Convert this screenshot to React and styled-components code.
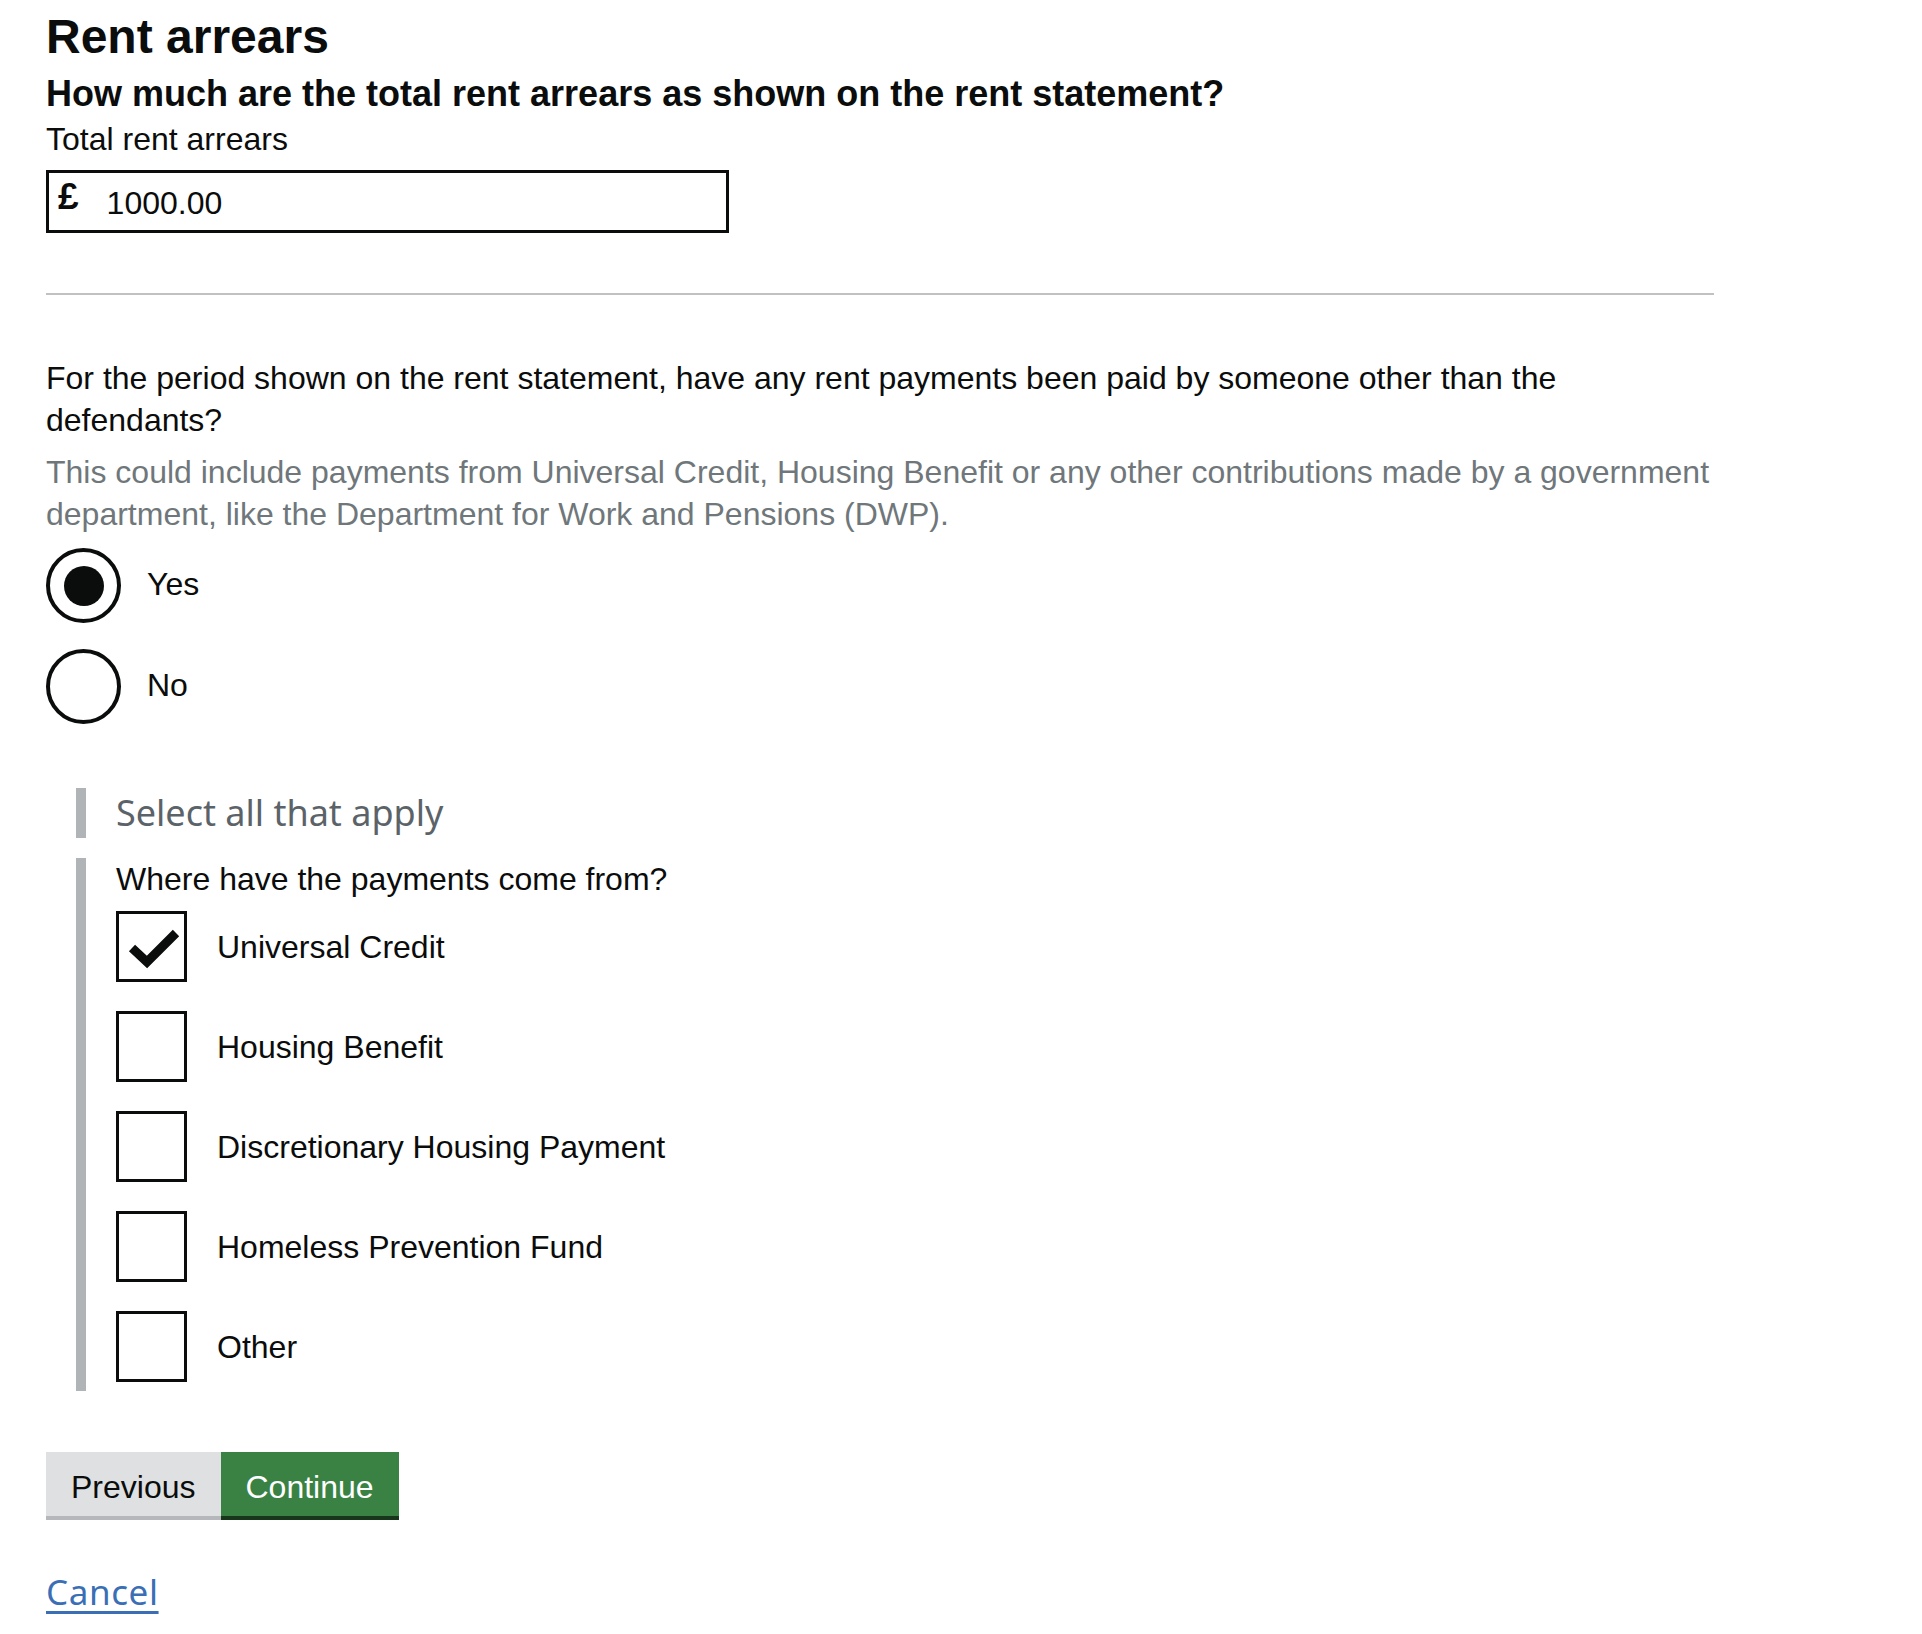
import React from 'react';
import styled, { createGlobalStyle } from 'styled-components';

const GlobalStyle = createGlobalStyle`
  body {
    margin: 0;
    background: #fff;
    color: #0b0c0c;
    font-family: "Liberation Sans", Arial, sans-serif;
  }
`;

const Page = styled.main`
  width: 1668px;
  padding: 10px 0 24px 46px;
`;

const Title = styled.h1`
  margin: 0;
  font-size: 48px;
  line-height: 54px;
  font-weight: 700;
`;

const Question = styled.h2`
  margin: 8px 0 0;
  font-size: 36px;
  line-height: 44px;
  font-weight: 700;
`;

const Label = styled.label`
  display: block;
  margin-top: 2px;
  font-size: 32px;
  line-height: 42px;
`;

const MoneyBox = styled.div`
  display: flex;
  align-items: center;
  width: 683px;
  height: 63px;
  margin-top: 10px;
  box-sizing: border-box;
  border: 3px solid #0b0c0c;
  padding-left: 9px;
`;

const Currency = styled.span`
  font-size: 37px;
  font-weight: 700;
  line-height: 1;
  margin-top: -10px;
`;

const MoneyInput = styled.input`
  flex: 1;
  border: 0;
  outline: none;
  padding: 4px 0 0 28px;
  font-family: inherit;
  font-size: 32px;
  color: #0b0c0c;
  background: transparent;
`;

const Divider = styled.hr`
  margin: 60px 0 0;
  border: 0;
  border-top: 2px solid #bfc1c3;
`;

const Paragraph = styled.p`
  margin: 62px 0 0;
  font-size: 32px;
  line-height: 42px;
`;

const Hint = styled.p`
  margin: 10px 0 0;
  font-size: 32px;
  line-height: 42px;
  color: #6f777b;
`;

const Choices = styled.div`
  display: flex;
  flex-direction: column;
  gap: 26px;
  margin-top: 13px;
`;

const Choice = styled.label`
  display: flex;
  align-items: center;
  gap: 26px;
  font-size: 32px;
  line-height: 42px;
`;

const ChoiceText = styled.span`
  margin-top: -4px;
`;

const Radio = styled.span`
  display: flex;
  align-items: center;
  justify-content: center;
  width: 75px;
  height: 75px;
  box-sizing: border-box;
  border: 4px solid #0b0c0c;
  border-radius: 50%;

  &::after {
    content: "";
    width: 40px;
    height: 40px;
    border-radius: 50%;
    background: ${({ checked }) => (checked ? '#0b0c0c' : 'transparent')};
  }
`;

const Conditional = styled.section`
  margin: 64px 0 0 30px;
`;

const SideRule = styled.div`
  border-left: 10px solid #b1b4b6;
  padding-left: 30px;
  margin-top: ${({ gap }) => gap || 0}px;
  padding-bottom: ${({ bottom }) => bottom || 0}px;
`;

const Legend = styled.div`
  font-family: "Noto Sans", "Open Sans", sans-serif;
  font-size: 36px;
  line-height: 50px;
  color: #5b6369;
`;

const SubQuestion = styled.div`
  font-size: 32px;
  line-height: 42px;
`;

const Boxes = styled.div`
  display: flex;
  flex-direction: column;
  gap: 29px;
  margin-top: 11px;
`;

const BoxRow = styled.label`
  display: flex;
  align-items: center;
  gap: 30px;
  font-size: 32px;
  line-height: 42px;
`;

const Box = styled.span`
  position: relative;
  width: 71px;
  height: 71px;
  box-sizing: border-box;
  border: 3px solid #0b0c0c;
  flex-shrink: 0;

  svg {
    position: absolute;
    left: -3px;
    top: -3px;
  }
`;

const Actions = styled.div`
  display: flex;
  margin-top: 61px;
`;

const Button = styled.button`
  font-family: inherit;
  font-size: 32px;
  line-height: 40px;
  padding: 15px 25px 9px;
  border: 0;
  border-radius: 0;
  cursor: pointer;
  background: ${({ primary }) => (primary ? '#3a8244' : '#dee0e2')};
  color: ${({ primary }) => (primary ? '#fff' : '#0b0c0c')};
  box-shadow: 0 4px 0 ${({ primary }) => (primary ? '#17361b' : '#b5b7ba')};
`;

const CancelLink = styled.a`
  display: inline-block;
  margin-top: 54px;
  font-family: "Noto Sans", "Open Sans", sans-serif;
  font-size: 35px;
  line-height: 44px;
  letter-spacing: 0.6px;
  color: #3a6fb6;
  text-decoration: underline;
  text-decoration-thickness: 3px;
  text-underline-offset: 6px;
`;

const Tick = () => (
  <svg width="71" height="71" viewBox="0 0 71 71">
    <polyline points="16,37 31,51 60,22" fill="none" stroke="#0b0c0c" strokeWidth="9" />
  </svg>
);

const sources = [
  { label: 'Universal Credit', checked: true },
  { label: 'Housing Benefit' },
  { label: 'Discretionary Housing Payment' },
  { label: 'Homeless Prevention Fund' },
  { label: 'Other' },
];

export default function App() {
  return (
    <>
      <GlobalStyle />
      <Page>
        <Title>Rent arrears</Title>
        <Question>How much are the total rent arrears as shown on the rent statement?</Question>
        <Label htmlFor="arrears">Total rent arrears</Label>
        <MoneyBox>
          <Currency>£</Currency>
          <MoneyInput id="arrears" defaultValue="1000.00" />
        </MoneyBox>

        <Divider />

        <Paragraph>
          For the period shown on the rent statement, have any rent payments been paid by someone
          other than the defendants?
        </Paragraph>
        <Hint>
          This could include payments from Universal Credit, Housing Benefit or any other contributions
          made by a government department, like the Department for Work and Pensions (DWP).
        </Hint>
        <Choices>
          <Choice>
            <Radio checked />
            <ChoiceText>Yes</ChoiceText>
          </Choice>
          <Choice>
            <Radio />
            <ChoiceText>No</ChoiceText>
          </Choice>
        </Choices>

        <Conditional>
          <SideRule>
            <Legend>Select all that apply</Legend>
          </SideRule>
          <SideRule gap={20} bottom={9}>
            <SubQuestion>Where have the payments come from?</SubQuestion>
            <Boxes>
              {sources.map((s) => (
                <BoxRow key={s.label}>
                  <Box>{s.checked && <Tick />}</Box>
                  {s.label}
                </BoxRow>
              ))}
            </Boxes>
          </SideRule>
        </Conditional>

        <Actions>
          <Button>Previous</Button>
          <Button primary>Continue</Button>
        </Actions>

        <CancelLink href="#">Cancel</CancelLink>
      </Page>
    </>
  );
}
